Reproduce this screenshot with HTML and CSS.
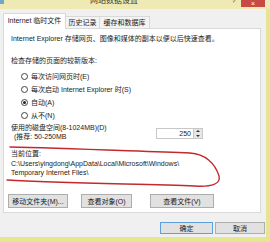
FILE: index.html
```html
<!DOCTYPE html>
<html lang="zh-CN">
<head>
    <meta charset="UTF-8">
    <title>网站数据设置</title>
    <link rel="stylesheet" href="styles.css">
</head>
<body>
    <div class="titlebar">
        <span class="title-icon"></span>
        <span class="title">网站数据设置</span>
        <span class="help">?</span>
        <span class="close">×</span>
    </div>

    <div class="window">
        <div class="tabs">
            <div class="tab tab-temp active">Internet 临时文件</div>
            <div class="tab tab-history">历史记录</div>
            <div class="tab tab-cache">缓存和数据库</div>
        </div>

        <div class="panel">
            <p class="desc">Internet Explorer 存储网页、图像和媒体的副本以便以后快速查看。</p>

            <p class="label-check">检查存储的页面的较新版本:</p>
            <div class="radio-group">
                <div class="radio"><span class="dot"></span>每次访问网页时(E)</div>
                <div class="radio"><span class="dot"></span>每次启动 Internet Explorer 时(S)</div>
                <div class="radio"><span class="dot checked"></span>自动(A)</div>
                <div class="radio"><span class="dot"></span>从不(N)</div>
            </div>

            <div class="disk-row">
                <div class="disk-text">
                    <div>使用的磁盘空间(8-1024MB)(D)</div>
                    <div class="hint">(推荐: 50-250MB</div>
                </div>
                <div class="spin">
                    <span class="spin-value">250</span>
                    <span class="spin-btns">
                        <span class="arrow up"></span>
                        <span class="arrow down"></span>
                    </span>
                </div>
            </div>

            <p class="location-label">当前位置:</p>
            <p class="location">C:\Users\yingdong\AppData\Local\Microsoft\Windows\<br>Temporary Internet Files\</p>

            <div class="panel-buttons">
                <button class="btn btn-move">移动文件夹(M)...</button>
                <button class="btn btn-objects">查看对象(O)</button>
                <button class="btn btn-files">查看文件(V)</button>
            </div>
        </div>

        <div class="footer">
            <button class="btn btn-ok">确定</button>
            <button class="btn btn-cancel">取消</button>
        </div>
    </div>

    <!-- 手绘的红圈 -->
    <svg class="scribble" width="270" height="242" viewBox="0 0 270 242">
        <path d="M 10 147 C 60 148, 130 151, 190 153 C 205 154, 215 163, 219 176 C 221 184, 212 187, 195 186 C 140 184, 60 183, 7 180" fill="none" stroke="#c22a2e" stroke-width="1.4" stroke-linecap="round"/>
    </svg>
</body>
</html>
```

FILE: styles.css
```css
body {
    margin: 0;
    width: 270px;
    height: 242px;
    overflow: hidden;
    position: relative;
    background: #e4e78f;
    font-family: "Liberation Sans", "Noto Sans CJK SC", sans-serif;
    font-size: 7px;
    color: #1a1a1a;
}

p {
    margin: 0;
}

.titlebar {
    height: 9px;
    background: #efeab4;
    display: flex;
    align-items: flex-start;
    overflow: hidden;
}

.title-icon {
    width: 4px;
    height: 4px;
    background: #6fa8c8;
}

.title {
    flex: 1;
    text-align: center;
    font-size: 8px;
    line-height: 8px;
    margin-top: -3px;
    padding-right: 8px;
    color: #3a3a30;
}

.help {
    width: 9px;
    font-size: 6px;
    line-height: 6px;
    margin-top: -2px;
    color: #333;
}

.close {
    width: 24px;
    height: 7px;
    margin-right: 5px;
    background: #c84a44;
    color: #fff;
    text-align: center;
    font-size: 7px;
    line-height: 7px;
}

.window {
    background: #f0f0f0;
    width: 263px;
    height: 224px;
    padding: 4px 0 0 3px;
}

.tabs {
    display: flex;
    align-items: flex-end;
    height: 15px;
}

.tab {
    height: 12px;
    line-height: 11px;
    border: 1px solid #d9d9d9;
    border-bottom: none;
    background: #f4f4f4;
    text-align: center;
    margin-left: -1px;
    box-sizing: border-box;
}

.tab.active {
    height: 16px;
    line-height: 14px;
    background: #fff;
    position: relative;
    z-index: 1;
    margin-bottom: -1px;
    margin-left: 0;
}

.tab-temp {
    width: 63px;
}

.tab-history {
    width: 35px;
}

.tab-cache {
    width: 51px;
}

.panel {
    background: #fff;
    border: 1px solid #d9d9d9;
    width: 249px;
    height: 183px;
    padding-left: 7px;
    line-height: 9px;
}

.desc {
    margin-top: 5px;
}

.label-check {
    margin-top: 13px;
}

.radio-group {
    margin-top: 5px;
    padding-left: 10px;
}

.radio {
    display: flex;
    align-items: center;
    height: 13px;
}

.dot {
    width: 5px;
    height: 5px;
    border: 1px solid #444;
    border-radius: 50%;
    margin-right: 3px;
    position: relative;
}

.dot.checked::after {
    content: "";
    position: absolute;
    left: 1px;
    top: 1px;
    width: 3px;
    height: 3px;
    border-radius: 50%;
    background: #222;
}

.disk-row {
    display: flex;
    margin-top: 1px;
}

.disk-text {
    width: 145px;
}

.hint {
    padding-left: 3px;
}

.spin {
    display: flex;
    align-items: center;
    width: 45px;
    height: 9px;
    margin-top: 5px;
    border: 1px solid #c8c8c8;
    background: #fff;
}

.spin-value {
    flex: 1;
    text-align: right;
    padding-right: 2px;
}

.spin-btns {
    display: flex;
    flex-direction: column;
    justify-content: space-around;
    align-items: center;
    width: 8px;
    height: 9px;
    background: #e6e6e6;
    border-left: 1px solid #c8c8c8;
}

.arrow {
    width: 0;
    height: 0;
    border-left: 2px solid transparent;
    border-right: 2px solid transparent;
}

.arrow.up {
    border-bottom: 2px solid #333;
}

.arrow.down {
    border-top: 2px solid #333;
}

.location-label {
    margin-top: 8px;
}

.location {
    margin-top: 1px;
}

.panel-buttons {
    display: flex;
    margin-top: 17px;
    margin-left: -3px;
}

.btn {
    height: 14px;
    padding: 0;
    border: 1px solid #adadad;
    background: #e1e1e1;
    font-family: inherit;
    font-size: 7px;
    color: #1a1a1a;
}

.btn-move {
    width: 60px;
}

.btn-objects {
    width: 51px;
    margin-left: 13px;
}

.btn-files {
    width: 64px;
    margin-left: 18px;
}

.footer {
    display: flex;
    justify-content: flex-end;
    margin-top: 9px;
    padding-right: 1px;
}

.btn-ok {
    width: 53px;
    height: 12px;
    border-color: #5ea0dc;
}

.btn-cancel {
    width: 50px;
    height: 12px;
    margin-left: 2px;
}

.scribble {
    position: absolute;
    left: 0;
    top: 0;
    pointer-events: none;
}
```
